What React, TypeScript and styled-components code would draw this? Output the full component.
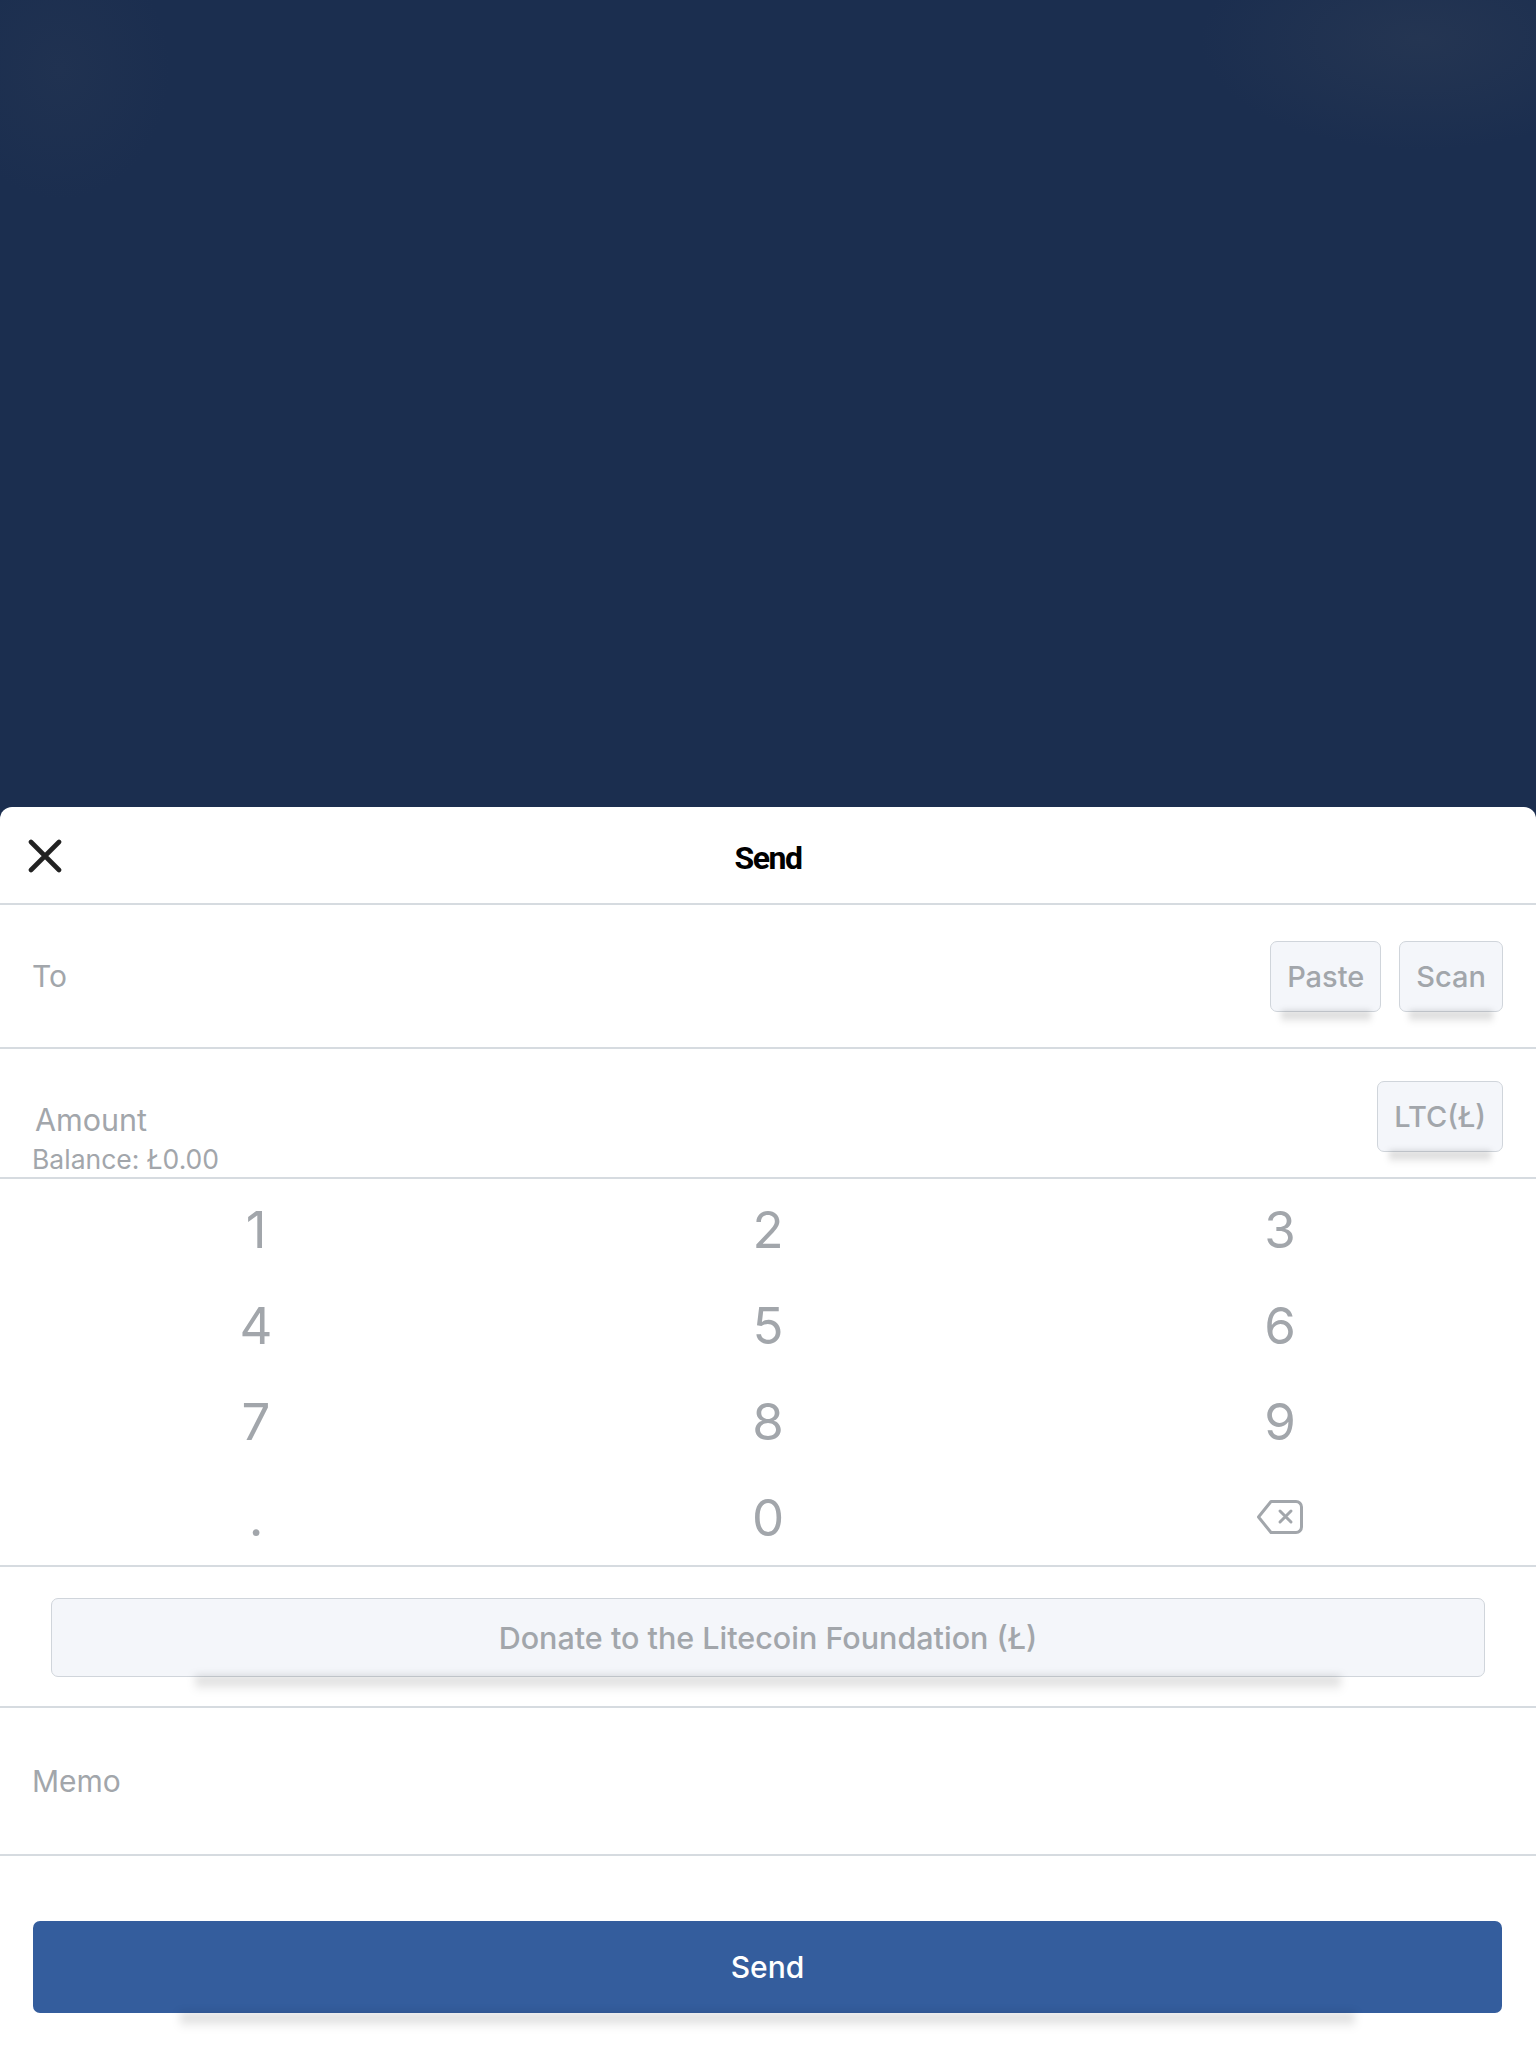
import styled, { createGlobalStyle } from 'styled-components';

const GlobalStyle = createGlobalStyle`
  html, body {
    margin: 0;
    padding: 0;
    background: #ffffff;
  }
  * {
    box-sizing: border-box;
  }
`;

const muted = '#a2a6ab';
const line = '#d6dbe0';

const Page = styled.div`
  display: flex;
  flex-direction: column;
  width: 1536px;
  min-height: 2048px;
  background: #1b2e4f;
  font-family: Inter, 'Open Sans', sans-serif;
`;

const Backdrop = styled.div`
  height: 807px;
  flex-shrink: 0;
  background:
    radial-gradient(ellipse 220px 110px at 1420px 40px, rgba(58, 70, 90, 0.3), rgba(27, 46, 79, 0) 100%),
    radial-gradient(ellipse 110px 130px at 60px 70px, rgba(50, 64, 88, 0.22), rgba(27, 46, 79, 0) 100%),
    #1b2e4f;
`;

const Sheet = styled.div`
  flex: 1;
  display: flex;
  flex-direction: column;
  background: #ffffff;
  border-radius: 12px 12px 0 0;
`;

const Header = styled.div`
  display: grid;
  grid-template-columns: 1fr auto 1fr;
  align-items: center;
  height: 98px;
  padding: 2px 28px 0;
  border-bottom: 2px solid ${line};
`;

const CloseButton = styled.button`
  justify-self: start;
  display: flex;
  padding: 0;
  border: 0;
  background: none;
  cursor: pointer;
`;

const Title = styled.div`
  padding-top: 4px;
  font-family: Roboto, 'Liberation Sans', sans-serif;
  font-weight: 700;
  font-size: 32px;
  letter-spacing: -1.5px;
  color: #000000;
`;

const Row = styled.div<{ $height: number; $shift?: number }>`
  display: flex;
  align-items: center;
  justify-content: space-between;
  height: ${p => p.$height}px;
  padding: ${p => p.$shift ?? 0}px 33px 0 32px;
  border-bottom: 2px solid ${line};
`;

const FieldLabel = styled.div`
  font-size: 30px;
  color: ${muted};
`;

const ButtonGroup = styled.div`
  display: flex;
  gap: 18px;
`;

const ChipButton = styled.button`
  position: relative;
  height: 71px;
  padding: 0 16px;
  font-family: Inter, 'Open Sans', sans-serif;
  font-size: 29px;
  font-weight: 500;
  color: ${muted};
  background: #f4f6fa;
  border: 1.5px solid #d0d5db;
  border-radius: 7px;

  &::after {
    content: '';
    position: absolute;
    left: 9%;
    right: 9%;
    top: 100%;
    height: 13px;
    background: linear-gradient(rgba(0, 0, 0, 0.2), rgba(0, 0, 0, 0));
    filter: blur(3px);
  }
`;

const AmountLabels = styled.div`
  align-self: flex-end;
  display: flex;
  flex-direction: column;
  gap: 6px;
  padding-bottom: 3px;
`;

const AmountLabel = styled.div`
  font-size: 30.5px;
  line-height: 36px;
  color: ${muted};
  padding-left: 3px;
`;

const Balance = styled.div`
  font-size: 26.5px;
  line-height: 30px;
  color: ${muted};
`;

const Keypad = styled.div`
  display: grid;
  grid-template-columns: repeat(3, 1fr);
  grid-auto-rows: 96px;
  padding-top: 2px;
  border-bottom: 2px solid ${line};
`;

const Key = styled.button`
  display: flex;
  align-items: center;
  justify-content: center;
  padding: 0;
  border: 0;
  background: none;
  font-family: Inter, 'Open Sans', sans-serif;
  font-size: 51px;
  font-weight: 400;
  color: ${muted};
`;

const DonateSection = styled.div`
  padding: 31px 51px 29px;
  border-bottom: 2px solid ${line};
`;

const WideButton = styled.button<{ $primary?: boolean }>`
  position: relative;
  display: flex;
  align-items: center;
  justify-content: center;
  width: 100%;
  height: ${p => (p.$primary ? 92 : 79)}px;
  font-family: Inter, 'Open Sans', sans-serif;
  font-size: ${p => (p.$primary ? 30 : 30.5)}px;
  font-weight: 500;
  color: ${p => (p.$primary ? '#ffffff' : muted)};
  background: ${p => (p.$primary ? '#345d9d' : '#f4f6fa')};
  border: ${p => (p.$primary ? '0' : '1.5px solid #d0d5db')};
  border-radius: 7px;

  &::after {
    content: '';
    position: absolute;
    left: 10%;
    right: 10%;
    top: 100%;
    height: 16px;
    background: linear-gradient(rgba(0, 0, 0, 0.18), rgba(0, 0, 0, 0));
    filter: blur(4px);
  }
`;

const SendSection = styled.div`
  padding: 65px 34px 34px 33px;
`;

const CloseIcon = () => (
  <svg width="34" height="34" viewBox="0 0 34 34">
    <path d="M3 3 L31 31 M31 3 L3 31" stroke="#222222" strokeWidth="4.6" strokeLinecap="round" fill="none" />
  </svg>
);

const BackspaceIcon = () => (
  <svg width="48" height="36" viewBox="0 0 48 36" fill="none">
    <path
      d="M15 2.5 H40 a5.5 5.5 0 0 1 5.5 5.5 V28 a5.5 5.5 0 0 1 -5.5 5.5 H15 L2.5 18 Z"
      stroke={muted}
      strokeWidth="3"
      strokeLinejoin="round"
    />
    <path d="M24 12 L35 23 M35 12 L24 23" stroke={muted} strokeWidth="3" strokeLinecap="round" />
  </svg>
);

const keys = ['1', '2', '3', '4', '5', '6', '7', '8', '9', '.', '0'];

export default function App() {
  return (
    <>
      <GlobalStyle />
      <Page>
        <Backdrop />
        <Sheet>
          <Header>
            <CloseButton aria-label="Close">
              <CloseIcon />
            </CloseButton>
            <Title>Send</Title>
          </Header>

          <Row $height={144}>
            <FieldLabel>To</FieldLabel>
            <ButtonGroup>
              <ChipButton>Paste</ChipButton>
              <ChipButton>Scan</ChipButton>
            </ButtonGroup>
          </Row>

          <Row $height={130} $shift={6}>
            <AmountLabels>
              <AmountLabel>Amount</AmountLabel>
              <Balance>Balance: Ł0.00</Balance>
            </AmountLabels>
            <ChipButton>LTC(Ł)</ChipButton>
          </Row>

          <Keypad>
            {keys.map(k => (
              <Key key={k}>{k}</Key>
            ))}
            <Key aria-label="Delete">
              <BackspaceIcon />
            </Key>
          </Keypad>

          <DonateSection>
            <WideButton>Donate to the Litecoin Foundation (Ł)</WideButton>
          </DonateSection>

          <Row $height={148}>
            <FieldLabel>Memo</FieldLabel>
          </Row>

          <SendSection>
            <WideButton $primary>Send</WideButton>
          </SendSection>
        </Sheet>
      </Page>
    </>
  );
}
